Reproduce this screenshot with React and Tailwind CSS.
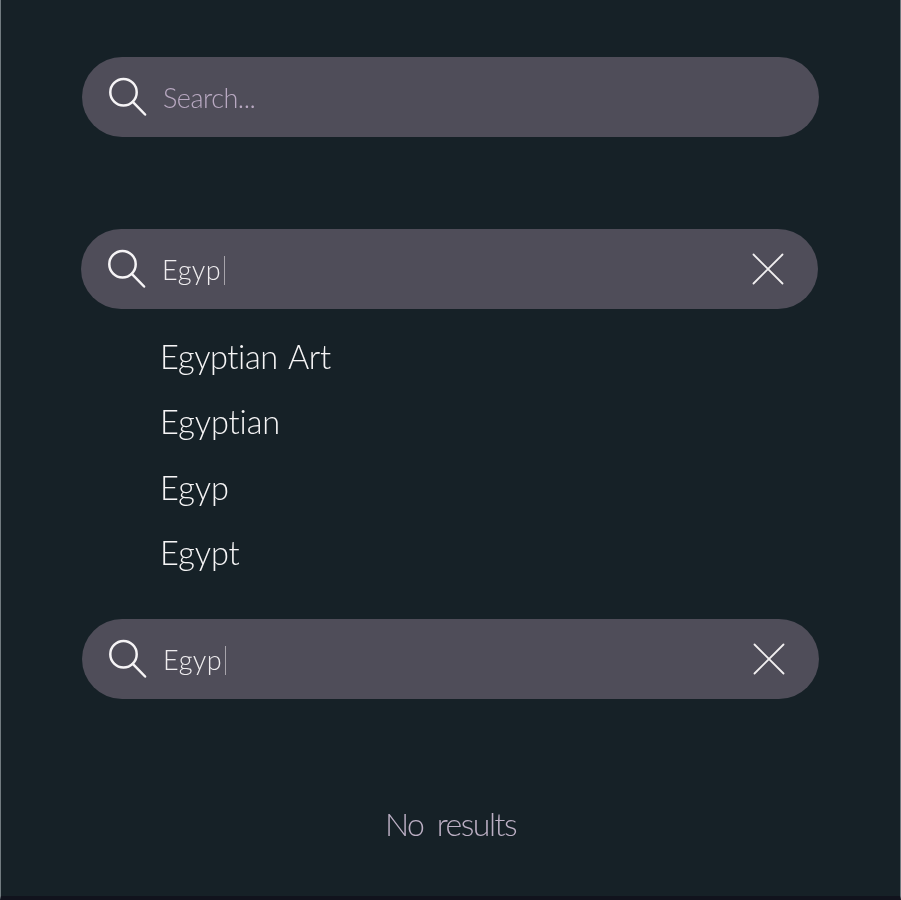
function SearchIcon() {
  return (
    <svg className="h-10 w-10 shrink-0" viewBox="0 0 40 40" fill="none" stroke="#f6f4f6" strokeWidth="2.5" strokeLinecap="round">
      <circle cx="15.5" cy="15.2" r="13.2" />
      <path d="M24.8 24.8 37.1 37.5" />
    </svg>
  );
}

function CloseIcon() {
  return (
    <svg className="ml-auto h-8 w-8 shrink-0" viewBox="0 0 32 32" fill="none" stroke="#f1eff0" strokeWidth="1.8" strokeLinecap="round">
      <path d="M1.5 1.5 30.5 30.5M30.5 1.5 1.5 30.5" />
    </svg>
  );
}

function SearchBar({ value, className }) {
  return (
    <div className={`flex h-20 w-[737px] shrink-0 items-center rounded-full bg-[#4f4d59] pl-[26px] pr-[34px] ${className}`}>
      <SearchIcon />
      {value ? (
        <>
          <span className="ml-[15px] mt-[2px] w-[62px] whitespace-nowrap text-[27px] leading-8 tracking-[0.4px] text-[#efedef]">{value}</span>
          <span className="mt-[2px] h-[29px] w-px bg-[#a7a4ab]" />
          <CloseIcon />
        </>
      ) : (
        <span className="ml-[15px] mt-[2px] whitespace-nowrap text-[27px] leading-8 tracking-[-0.5px] text-[#b9a9c2]">Search...</span>
      )}
    </div>
  );
}

const suggestions = ["Egyptian Art", "Egyptian", "Egyp", "Egypt"];

export default function App() {
  return (
    <main className="flex h-[900px] w-[901px] flex-col overflow-hidden border-x border-b-4 border-x-[#717b80] border-b-[#11131d] bg-[#162127] font-['Lato',sans-serif] font-light will-change-transform">
      <SearchBar className="ml-[81px] mt-[57px]" />
      <SearchBar value="Egyp" className="ml-[80px] mt-[92px]" />
      <ul className="ml-[159px] mt-[15px] h-[264px] text-[32.5px] leading-[65.4px] tracking-[-0.1px] text-[#f6f5f6] [word-spacing:3px]">
        {suggestions.map((item) => (
          <li key={item} className={item === "Egyptian Art" ? "tracking-[-0.4px]" : ""}>{item}</li>
        ))}
      </ul>
      <SearchBar value="Egyp" className="ml-[81px] mt-[31px]" />
      <p className="mt-[105px] text-center text-[32px] leading-10 tracking-[-1.5px] text-[#bcafc4] [word-spacing:6px]">No results</p>
    </main>
  );
}
